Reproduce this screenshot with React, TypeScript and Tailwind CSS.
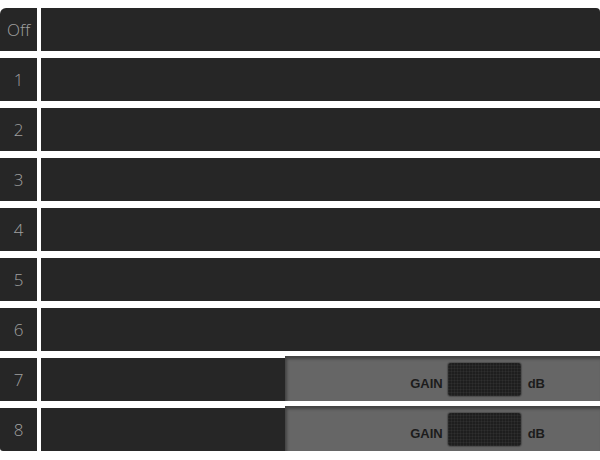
const rows = ["Off", "1", "2", "3", "4", "5", "6", "7", "8"];

const GainPanel = () => (
    <div className="ml-auto flex h-[45px] w-[315px] -mt-[2px] items-center justify-end bg-[#666666] pr-[55px] shadow-[inset_2px_3px_3px_rgba(0,0,0,0.35)]">
        <span className="mt-[11px] mr-[5px] text-[13px] font-bold text-[#1c1c1c]">GAIN</span>
        <div className="mt-[1px] h-[33px] w-[73px] rounded-[3px] bg-[#1e1e1e] bg-[repeating-linear-gradient(90deg,rgba(255,255,255,0.04)_0px,rgba(255,255,255,0.04)_1px,transparent_1px,transparent_3px),repeating-linear-gradient(0deg,rgba(255,255,255,0.04)_0px,rgba(255,255,255,0.04)_1px,transparent_1px,transparent_3px)] shadow-[0_0_1px_1px_rgba(0,0,0,0.25)]" />
        <span className="mt-[11px] ml-[7px] text-[13px] font-bold text-[#1c1c1c]">dB</span>
    </div>
);

export default function App() {
    return (
        <div className="flex h-[460px] w-[600px] flex-col gap-[7px] bg-white pt-[8px] font-['Liberation_Sans',sans-serif]">
            {rows.map((label, i) => (
                <div key={label} className="flex h-[43px] gap-[4px]">
                    <div
                        className={`flex w-[37px] items-center justify-center bg-[#262626] font-['Open_Sans',sans-serif] text-[17px] font-light text-[#a0a0a0] ${i === 0 ? "rounded-tl-[6px]" : ""} ${i === rows.length - 1 ? "rounded-bl-[3px]" : ""}`}
                    >
                        {label}
                    </div>
                    <div className={`flex flex-1 bg-[#262626] ${i === 0 ? "rounded-tr-[4px]" : ""}`}>
                        {label === "7" || label === "8" ? <GainPanel /> : null}
                    </div>
                </div>
            ))}
        </div>
    );
}
